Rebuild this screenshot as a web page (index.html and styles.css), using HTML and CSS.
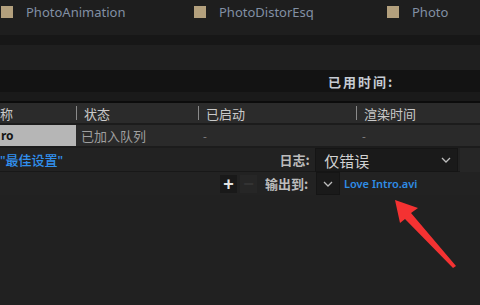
FILE: index.html
```html
<!DOCTYPE html>
<html>
<head>
<meta charset="utf-8">
<link rel="stylesheet" href="styles.css">
</head>
<body>
<div class="page">
  <div class="fxbar">
    <div class="fx fx1"><span class="sw"></span><span class="fxname">PhotoAnimation</span></div>
    <div class="fx fx2"><span class="sw"></span><span class="fxname">PhotoDistorEsq</span></div>
    <div class="fx fx3"><span class="sw"></span><span class="fxname">Photo</span></div>
  </div>
  <div class="band b1"></div>
  <div class="band b2"></div>
  <div class="band b3"></div>
  <div class="timebar"><span class="elapsed">已用时间:</span></div>
  <div class="band b4"></div>
  <div class="band blk"></div>
  <div class="thead">
    <div class="th c1">称</div>
    <div class="th c2"><span class="sep"></span>状态</div>
    <div class="th c3"><span class="sep"></span>已启动</div>
    <div class="th c4"><span class="sep"></span>渲染时间</div>
  </div>
  <div class="band b5"></div>
  <div class="trow">
    <div class="td c1 sel">ro</div>
    <div class="td c2">已加入队列</div>
    <div class="td c3 dash">-</div>
    <div class="td c4 dash">-</div>
  </div>
  <div class="settings">
    <div class="preset">"最佳设置"</div>
    <div class="lbl loglbl">日志:</div>
    <div class="dd big"><span>仅错误</span><svg class="chev" width="10" height="6" viewBox="0 0 10 6"><path d="M1 1l4 4 4-4" fill="none" stroke="#bdbdbd" stroke-width="1.3"/></svg></div>
    <div class="rside"></div>
  </div>
  <div class="output">
    <div class="btn">+</div>
    <div class="btn dim">−</div>
    <div class="lbl outlbl">输出到:</div>
    <div class="dd small"><svg class="chev" width="10" height="6" viewBox="0 0 10 6"><path d="M1 1l4 4 4-4" fill="none" stroke="#bdbdbd" stroke-width="1.3"/></svg></div>
    <div class="file">Love Intro.avi</div>
  </div>
  <div class="rest"></div>
  <svg class="arrow" width="480" height="305" viewBox="0 0 480 305">
    <path d="M395 200 L418 208 L411 213 L456 266 L453 268 L405 219 L400 223 Z" fill="#f43232"/>
  </svg>
</div>
</body>
</html>
```
FILE: styles.css
```css
html, body { margin: 0; padding: 0; }
body { background: #212121; font-family: "Noto Sans", "Noto Sans CJK SC", sans-serif; overflow: hidden; }
.page { position: relative; width: 480px; height: 305px; background: #212121; }
.fxbar { height: 24px; background: #1e1e1e; display: flex; align-items: center; }
.fx { display: flex; align-items: center; }
.fx1 { width: 193px; padding-left: 1px; }
.fx2 { width: 193px; }
.sw { width: 12px; height: 12px; background: #b3a07d; margin-right: 13px; }
.fxname { color: #8290a4; font-size: 13px; line-height: 16px; }
.b1 { height: 11px; background: #1e1e1e; }
.b2 { height: 10px; background: #171717; }
.b3 { height: 25px; background: #1f1f1f; }
.timebar { height: 22px; background: #131313; display: flex; align-items: center; padding-left: 328px; }
.elapsed { color: #c6ccd4; font-size: 13px; font-weight: bold; font-family: "Noto Sans CJK SC", sans-serif; letter-spacing: 2px; }
.b4 { height: 9px; background: #1a1a1a; }
.blk { height: 2px; background: #0c0c0c; }
.thead { height: 20px; background: #2b2b2b; display: flex; align-items: center; color: #c9c9c9; font-size: 13px; font-family: "Noto Sans CJK SC", sans-serif; }
.th { display: flex; align-items: center; height: 100%; }
.c1 { width: 76px; }
.c2 { width: 122px; }
.c3 { width: 158px; }
.c4 { flex: 1; }
.sep { width: 1px; height: 14px; background: #8a8a8a; margin-right: 7px; }
.b5 { height: 2px; background: #1c1c1c; }
.trow { height: 21px; background: #2a2a2a; display: flex; align-items: center; font-size: 13px; font-family: "Noto Sans CJK SC", sans-serif; border-bottom: 2px solid #1c1c1c; }
.td { height: 100%; display: flex; align-items: center; }
.trow .c2 { padding-left: 5px; box-sizing: border-box; color: #9f9f9f; }
.trow .c3 { padding-left: 5px; box-sizing: border-box; }
.trow .c4 { padding-left: 6px; }
.sel { background: #b6b6b6; color: #151515; font-weight: bold; font-family: "Noto Sans", sans-serif; font-size: 12px; padding-left: 1px; box-sizing: border-box; }
.dash { color: #8a8a8a; font-size: 11px; }
.settings { height: 23px; background: #222222; display: flex; align-items: center; border-bottom: 1px solid #181818; }
.preset { color: #3190ee; font-size: 13px; font-weight: 500; width: 280px; font-family: "Noto Sans", "Noto Sans CJK SC", sans-serif; }
.lbl { color: #bcbcbc; font-size: 13px; font-family: "Noto Sans CJK SC", sans-serif; font-weight: bold; }
.loglbl { width: 36px; }
.dd { background: #1a1a1a; border: 1px solid #151515; box-sizing: border-box; display: flex; align-items: center; }
.big { width: 143px; height: 24px; color: #d2d2d2; font-size: 15px; font-family: "Noto Sans CJK SC", sans-serif; padding-left: 8px; justify-content: space-between; padding-right: 6px; margin-top: 1px; }
.rside { width: 20px; height: 24px; background: #262626; margin-left: 2px; }
.output { height: 23px; display: flex; align-items: center; background: #222222; padding-left: 220px; }
.btn { width: 17px; height: 18px; background: #191919; color: #e2e2e2; font-size: 18px; font-weight: bold; line-height: 18px; text-align: center; margin-right: 3px; font-family: "Liberation Sans", sans-serif; }
.btn.dim { color: #333333; background: #262626; margin-right: 8px; }
.outlbl { width: 51px; }
.small { width: 24px; height: 23px; justify-content: center; }
.file { color: #2f8de6; font-size: 11px; font-weight: 600; margin-left: 4px; font-family: "Noto Sans", sans-serif; }
.rest { height: 110px; background: #212121; }
.arrow { position: absolute; left: 0; top: 0; pointer-events: none; }
```
